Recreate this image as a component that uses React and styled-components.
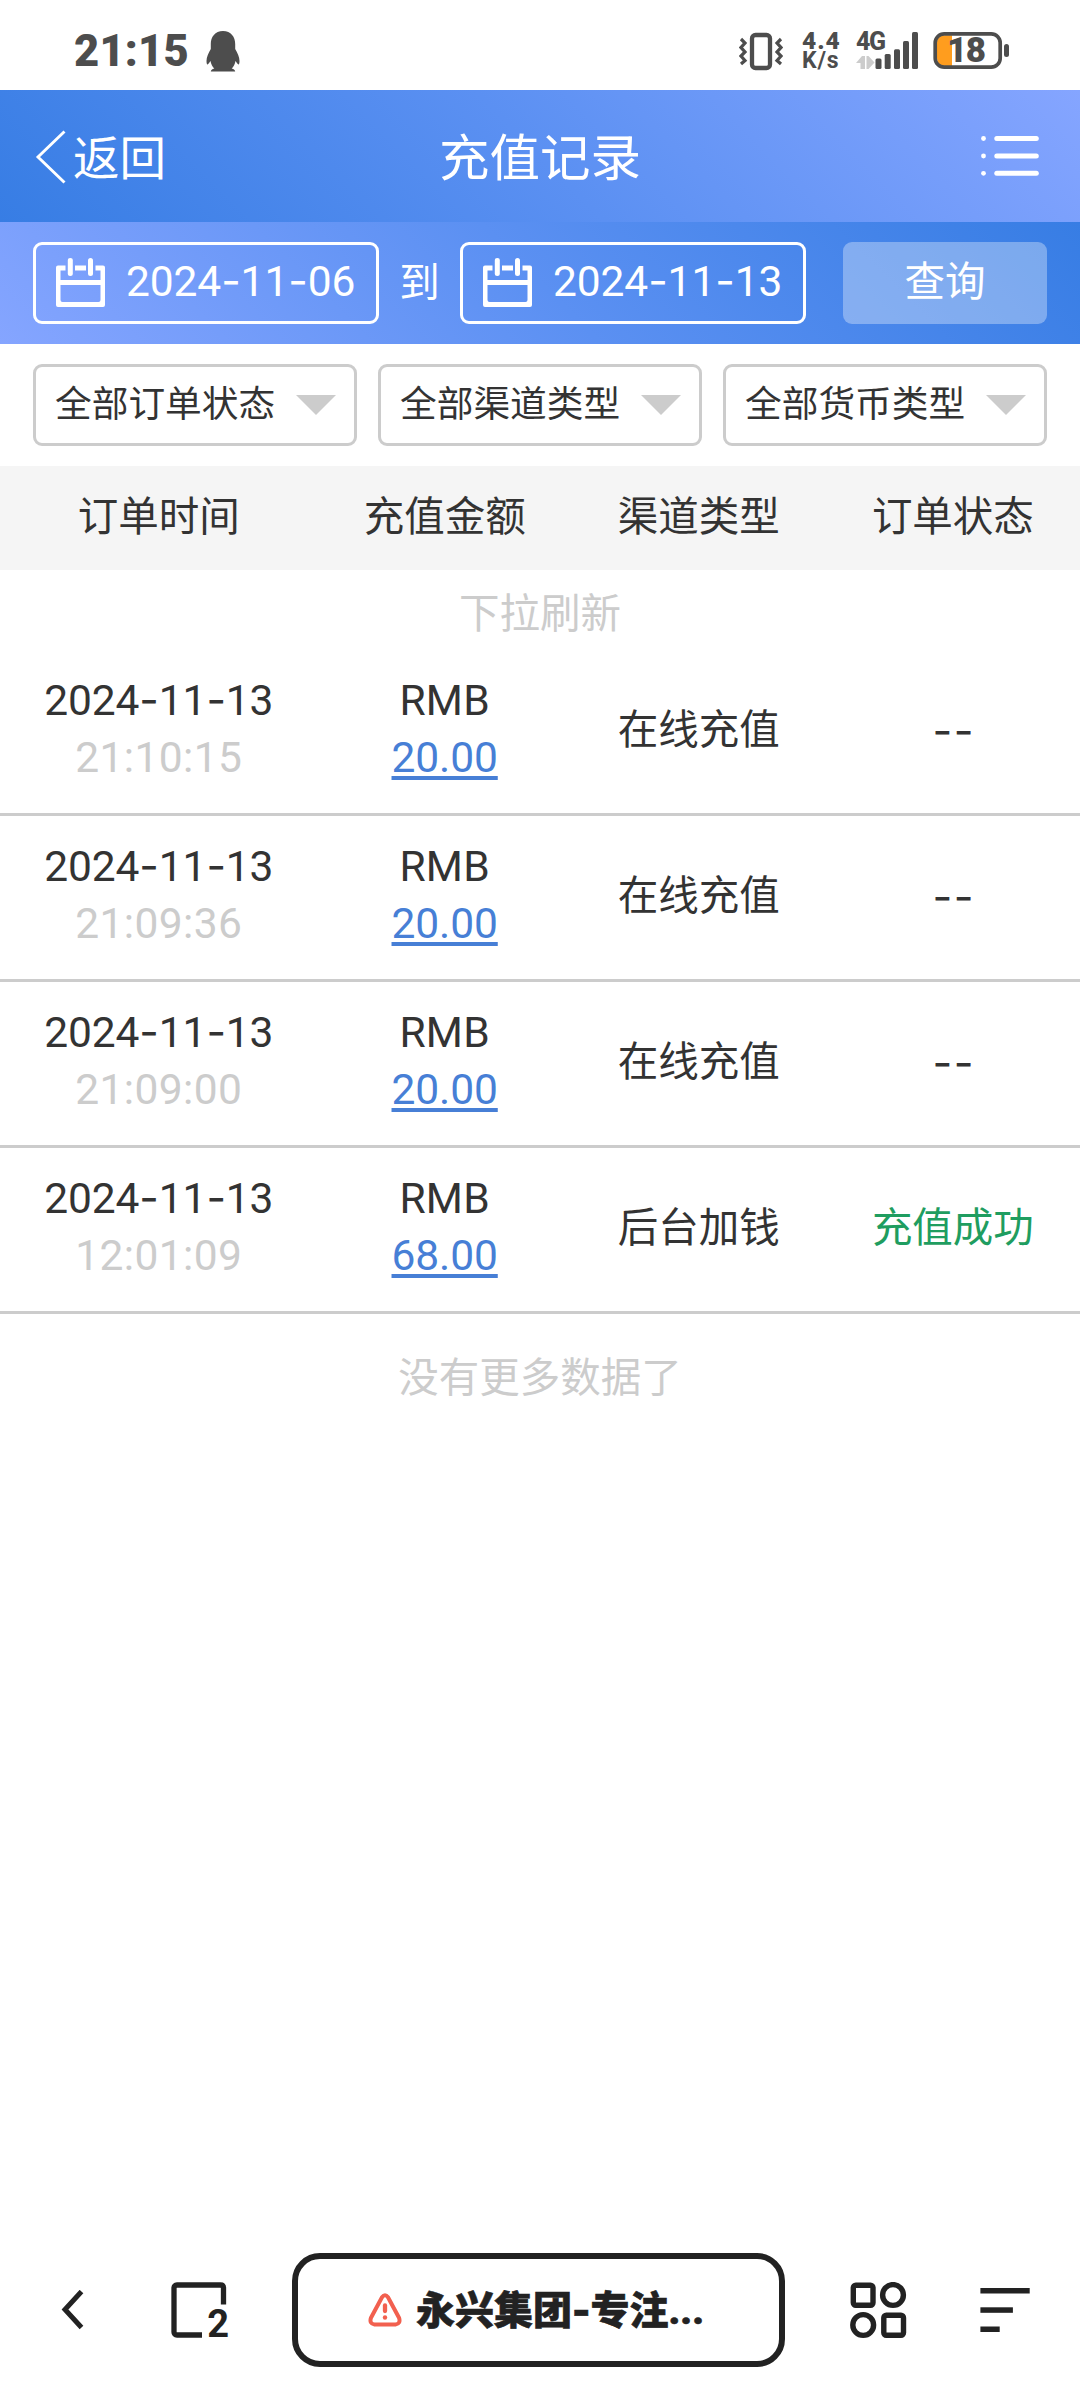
import React from 'react'
import styled, { createGlobalStyle } from 'styled-components'

const GlobalStyle = createGlobalStyle`
  * {
    box-sizing: border-box;
  }
  body {
    margin: 0;
    background: #fff;
    color: #333;
    font-family: Roboto, 'Noto Sans CJK SC', sans-serif;
    font-size: 40.5px;
  }
`

const Page = styled.div`
  display: flex;
  flex-direction: column;
  width: 1080px;
  height: 2400px;
  background: #fff;
`

/* status bar */

const StatusBar = styled.div`
  display: flex;
  align-items: flex-start;
  justify-content: space-between;
  height: 90px;
  padding: 31px 71px 0 74px;
  color: #4d4d4d;
  font-weight: 900;
`

const StatusSide = styled.div`
  display: flex;
  align-items: flex-start;
`

const Clock = styled.span`
  width: 132px;
  padding-top: 1px;
  font-size: 43.5px;
  line-height: 40px;
  letter-spacing: 0.2px;
`

const NetSpeed = styled.div`
  display: flex;
  flex-direction: column;
  width: 40px;
  margin: 0 14px 0 19px;
  white-space: nowrap;
`

const SpeedValue = styled.span`
  font-size: 24.5px;
  line-height: 20px;
  letter-spacing: 1px;
`

const SpeedUnit = styled.span`
  font-size: 23px;
  font-weight: 700;
  line-height: 20px;
  letter-spacing: 0.8px;
`

const Signal = styled.div`
  position: relative;
  width: 62px;
  height: 40px;
  margin-right: 15px;
`

const SignalLabel = styled.span`
  position: absolute;
  left: 0;
  top: 0;
  font-size: 25px;
  line-height: 21px;
  letter-spacing: -1.5px;
  font-weight: 800;
`

const Battery = styled.div`
  position: relative;
  width: 76px;
  height: 40px;
`

const BatteryLevel = styled.span`
  position: absolute;
  left: 14px;
  top: 0;
  font-size: 35px;
  line-height: 40px;
  letter-spacing: -1.5px;
`

/* title bar */

const TitleBar = styled.header`
  display: grid;
  grid-template-columns: 1fr auto 1fr;
  align-items: center;
  height: 132px;
  padding: 0 41px 0 35px;
  background: linear-gradient(45deg, #377de4 0%, #5b90f2 50%, #85a5ff 100%);
  color: #fff;
`

const BackLink = styled.a`
  display: flex;
  align-items: center;
  gap: 6px;
  padding-top: 1px;
  font-size: 46.5px;
`

const BackLabel = styled.span`
  margin-top: -5px;
`

const Title = styled.h1`
  margin: 5px 0 0 6px;
  font-size: 50.5px;
  font-weight: 400;
  line-height: 60px;
`

const MenuButton = styled.div`
  display: flex;
  justify-content: flex-end;
`

/* date range */

const DateBar = styled.div`
  display: flex;
  align-items: center;
  height: 122px;
  padding: 0 33px;
  background: linear-gradient(45deg, #85a5ff 0%, #5b90f2 50%, #377de4 100%);
  color: #fff;
`

const DateBox = styled.div`
  display: flex;
  align-items: center;
  width: 346px;
  height: 82px;
  padding-left: 20px;
  border: 3px solid #fff;
  border-radius: 9px;
`

const DateValue = styled.span`
  margin: -6px 0 0 21px;
`

const To = styled.span`
  width: 81px;
  margin-top: -8px;
  text-align: center;
`

const SearchButton = styled.div`
  width: 204px;
  height: 82px;
  margin-left: auto;
  border-radius: 9px;
  background: rgba(255, 255, 255, 0.33);
  line-height: 80px;
  text-align: center;
`

const Digits = styled.span`
  font-size: 42.5px;
  letter-spacing: ${props => props.$spacing || '-0.1px'};
  white-space: nowrap;
`

const Dash = styled.span`
  font-family: Inter, sans-serif;
`

/* selects */

const SelectBar = styled.div`
  display: flex;
  align-items: center;
  gap: 21px;
  height: 122px;
  padding: 0 33px;
`

const Select = styled.div`
  display: flex;
  align-items: center;
  justify-content: space-between;
  flex: 1;
  height: 82px;
  padding: 0 18px 1px 19px;
  border: 3px solid #ccc;
  border-radius: 9px;
  font-size: 36.7px;
  line-height: 70px;
`

const Caret = styled.span`
  margin-top: 1px;
  border: 20px solid transparent;
  border-top-color: #ccc;
  border-bottom-width: 0;
`

/* table */

const columns = '317.6px 254.1px 254.1px 254.2px'

const TableHead = styled.div`
  display: grid;
  grid-template-columns: ${columns};
  height: 104px;
  background: #f5f5f5;
  line-height: 103px;
  text-align: center;
`

const Hint = styled.div`
  height: ${props => props.$height};
  padding-top: ${props => props.$offset};
  line-height: 80px;
  color: #ccc;
  text-align: center;
`

const Row = styled.div`
  display: grid;
  grid-template-columns: ${columns};
  align-items: center;
  height: 166px;
  padding-bottom: 6px;
  border-bottom: 3px solid #ccc;
  text-align: center;
`

const Cell = styled.div`
  display: flex;
  flex-direction: column;
  align-items: center;
  line-height: 57px;
`

const Label = styled(Cell)`
  padding-top: 3px;
  color: ${props => props.$color || 'inherit'};
`

const NoStatus = styled(Dash)`
  margin-left: 2px;
  font-size: 43px;
  letter-spacing: 1.5px;
`

const Time = styled(Digits)`
  color: #ccc;
`

const Amount = styled(Digits)`
  color: #477fd6;
  text-decoration: underline;
  text-decoration-thickness: 4px;
  text-underline-offset: 4px;
  text-decoration-skip-ink: none;
`

/* browser toolbar */

const Toolbar = styled.nav`
  display: flex;
  align-items: center;
  height: 114px;
  margin-top: auto;
  margin-bottom: 33px;
  padding: 0 50px 0 60px;
  color: #222;
`

const TabsButton = styled.div`
  position: relative;
  height: 56px;
  margin-left: 87px;
`

const TabCount = styled.span`
  position: absolute;
  right: -2px;
  bottom: -5px;
  font-size: 38px;
  font-weight: 700;
  line-height: 38px;
`

const AddressBox = styled.div`
  display: flex;
  align-items: center;
  width: 493px;
  height: 114px;
  margin-left: 65px;
  padding-left: 70px;
  border: 6px solid #222;
  border-radius: 28px;
`

const SiteName = styled.span`
  margin-left: 14px;
  font-family: Roboto, 'Noto Sans CJK SC', sans-serif;
  font-size: 39px;
  font-weight: 900;
  line-height: 50px;
  white-space: nowrap;
  -webkit-text-stroke: 0.6px #222;
`

const ToolbarEnd = styled.div`
  display: flex;
  align-items: center;
  justify-content: space-between;
  width: 180px;
  margin-left: auto;
`

const PenguinIcon = () => (
  <svg width="34" height="41" viewBox="0 0 34 41" fill="#4d4d4d">
    <path d="M17 0C9 0 4.800 6 4.800 13v5C2.500 22 .5 26 .5 30c0 3 .8 4 1.500 3.300.9-.8 1.700-2.300 2.500-3.300.6 3 1.800 5.500 3.800 7.500C6 38 5 39 4.800 40.500h24.400c-.2-1.500-1.200-2.500-3.500-3 2-2 3.200-4.500 3.800-7.500.8 1 1.600 2.500 2.500 3.300.7.7 1.500-.3 1.500-3.300 0-4-2-8-4.300-12v-5C29.200 6 25 0 17 0z" />
  </svg>
)

const VibrateIcon = () => (
  <svg width="44" height="40" viewBox="0 0 44 40" fill="none" stroke="#4d4d4d">
    <rect x="13" y="4" width="18" height="33" rx="3.500" strokeWidth="4.300" />
    <path d="M2 8l4 4-4 4.500 4 4.500-4 4 4 4.500-4 3.500M42 8l-4 4 4 4.500-4 4.500 4 4-4 4.500 4 3.500" strokeWidth="3.200" />
  </svg>
)

const SignalIcon = () => (
  <svg width="62" height="40" viewBox="0 0 62 40" fill="#4d4d4d">
    <path d="M0 32l6-7h3v13H4.500v-6zM10.500 25h2l6 6.500-6 6.500h-2z" fill="#ccc" />
    <rect x="19.500" y="27.500" width="6" height="10.500" rx="1.500" />
    <rect x="28.700" y="23" width="6" height="15" rx="1.500" />
    <rect x="38" y="18.300" width="6" height="19.700" rx="1.500" />
    <rect x="47" y="10" width="6" height="28" rx="1.500" />
    <rect x="56" y="1" width="6" height="37" rx="1.500" />
  </svg>
)

const BatteryIcon = () => (
  <svg width="76" height="40" viewBox="0 0 76 40">
    <path d="M19 4.300H12Q4 4.300 4 12v15q0 8 8 8h7z" fill="#ff9d1e" />
    <rect x="2.200" y="2.800" width="65" height="33.400" rx="9" fill="none" stroke="#4d4d4d" strokeWidth="3.700" />
    <rect x="71" y="13" width="5" height="13" rx="2.500" fill="#4d4d4d" />
  </svg>
)

const BackIcon = () => (
  <svg width="32" height="54" viewBox="0 0 32 54" fill="none" stroke="#fff" strokeWidth="2.900">
    <path d="M29.500 1.500L3 27l26.500 25.500" />
  </svg>
)

const ListIcon = () => (
  <svg width="58" height="42" viewBox="0 0 58 42" fill="#fff">
    {[3.500, 21, 38.300].map(y => (
      <React.Fragment key={y}>
        <circle cx="2.500" cy={y} r="2.400" />
        <rect x="13.300" y={y - 2.500} width="44.500" height="5" rx="2.500" />
      </React.Fragment>
    ))}
  </svg>
)

const CalendarIcon = () => (
  <svg width="49" height="50" viewBox="0 0 49 50" fill="#fff">
    <path fillRule="evenodd" d="M2 7.500h7.500v5H4.500V22h40v-9.500h-5v-5H47q2 0 2 2V47q0 2-2 2H2q-2 0-2-2V9.500q0-2 2-2zM4.500 27v15q0 2 2 2h36q2 0 2-2V27z" />
    <rect x="19" y="7.500" width="11" height="5" />
    <rect x="11.800" y="0" width="5" height="18" rx="2.500" />
    <rect x="32" y="0" width="5" height="18" rx="2.500" />
  </svg>
)

const PrevIcon = () => (
  <svg width="24" height="40" viewBox="0 0 24 40" fill="none" stroke="#222" strokeWidth="5">
    <path d="M21.500 1.500L5 19.500l16.500 18" />
  </svg>
)

const TabsIcon = () => (
  <svg width="56" height="56" viewBox="0 0 56 56" fill="none" stroke="#222" strokeWidth="5.300">
    <path d="M31 53H6q-3 0-3-3V6q0-3 3-3h43.500q3 0 3 3v16.500" />
  </svg>
)

const WarningIcon = () => (
  <svg width="34" height="34" viewBox="0 0 34 34" fill="none" stroke="#f2604f" strokeLinecap="round" strokeLinejoin="round">
    <path d="M14 4.200q3-4 6 0l11 20.500q2 6-3.500 6.800h-21Q1 30.700 3 24.700z" strokeWidth="4" />
    <path d="M17 12.500v5.500" strokeWidth="4.300" />
    <circle cx="17" cy="24.500" r="2.200" fill="#f2604f" stroke="none" />
  </svg>
)

const AppsIcon = () => (
  <svg width="57" height="57" viewBox="0 0 57 57" fill="none" stroke="#222" strokeWidth="5.400">
    <rect x="3.300" y="3.200" width="19.700" height="20" rx="2.500" />
    <circle cx="43" cy="13" r="10.400" />
    <circle cx="13.200" cy="43" r="10.400" />
    <rect x="33.800" y="33.200" width="19.700" height="20" rx="2.500" />
  </svg>
)

const SortIcon = () => (
  <svg width="50" height="46" viewBox="0 0 50 46" fill="#222">
    <rect x="0.400" y="1" width="49.300" height="5.500" />
    <rect x="0.400" y="20.300" width="32.500" height="5.500" />
    <rect x="0.400" y="39.500" width="19.300" height="5.500" />
  </svg>
)

const DateText = ({ value }) => (
  <Digits>
    {value.split('-').map((part, i) => (
      <React.Fragment key={i}>
        {i > 0 && <Dash>-</Dash>}
        {part}
      </React.Fragment>
    ))}
  </Digits>
)

const heads = ['订单时间', '充值金额', '渠道类型', '订单状态']
const filters = ['全部订单状态', '全部渠道类型', '全部货币类型']
const records = [
  { date: '2024-11-13', time: '21:10:15', amount: '20.00', channel: '在线充值' },
  { date: '2024-11-13', time: '21:09:36', amount: '20.00', channel: '在线充值' },
  { date: '2024-11-13', time: '21:09:00', amount: '20.00', channel: '在线充值' },
  { date: '2024-11-13', time: '12:01:09', amount: '68.00', channel: '后台加钱', status: '充值成功' }
]

const App = () => (
  <Page>
    <GlobalStyle />
    <StatusBar>
      <StatusSide>
        <Clock>21:15</Clock>
        <PenguinIcon />
      </StatusSide>
      <StatusSide>
        <VibrateIcon />
        <NetSpeed>
          <SpeedValue>4.4</SpeedValue>
          <SpeedUnit>K/s</SpeedUnit>
        </NetSpeed>
        <Signal>
          <SignalIcon />
          <SignalLabel>4G</SignalLabel>
        </Signal>
        <Battery>
          <BatteryIcon />
          <BatteryLevel>18</BatteryLevel>
        </Battery>
      </StatusSide>
    </StatusBar>
    <TitleBar>
      <BackLink>
        <BackIcon />
        <BackLabel>返回</BackLabel>
      </BackLink>
      <Title>充值记录</Title>
      <MenuButton>
        <ListIcon />
      </MenuButton>
    </TitleBar>
    <DateBar>
      <DateBox>
        <CalendarIcon />
        <DateValue>
          <DateText value="2024-11-06" />
        </DateValue>
      </DateBox>
      <To>到</To>
      <DateBox>
        <CalendarIcon />
        <DateValue>
          <DateText value="2024-11-13" />
        </DateValue>
      </DateBox>
      <SearchButton>查询</SearchButton>
    </DateBar>
    <SelectBar>
      {filters.map(label => (
        <Select key={label}>
          {label}
          <Caret />
        </Select>
      ))}
    </SelectBar>
    <TableHead>
      {heads.map(head => (
        <span key={head}>{head}</span>
      ))}
    </TableHead>
    <Hint $height="80px" $offset="4px">下拉刷新</Hint>
    {records.map(({ date, time, amount, channel, status }) => (
      <Row key={time}>
        <Cell>
          <DateText value={date} />
          <Time $spacing="0.4px">{time}</Time>
        </Cell>
        <Cell>
          <Digits $spacing="0.2px">RMB</Digits>
          <Amount>{amount}</Amount>
        </Cell>
        <Label>{channel}</Label>
        <Label $color={status && '#1f9d60'}>{status || <NoStatus>--</NoStatus>}</Label>
      </Row>
    ))}
    <Hint $height="122px" $offset="24px">没有更多数据了</Hint>
    <Toolbar>
      <PrevIcon />
      <TabsButton>
        <TabsIcon />
        <TabCount>2</TabCount>
      </TabsButton>
      <AddressBox>
        <WarningIcon />
        <SiteName>
          永兴集团<Dash>-</Dash>专注...
        </SiteName>
      </AddressBox>
      <ToolbarEnd>
        <AppsIcon />
        <SortIcon />
      </ToolbarEnd>
    </Toolbar>
  </Page>
)

export default App
